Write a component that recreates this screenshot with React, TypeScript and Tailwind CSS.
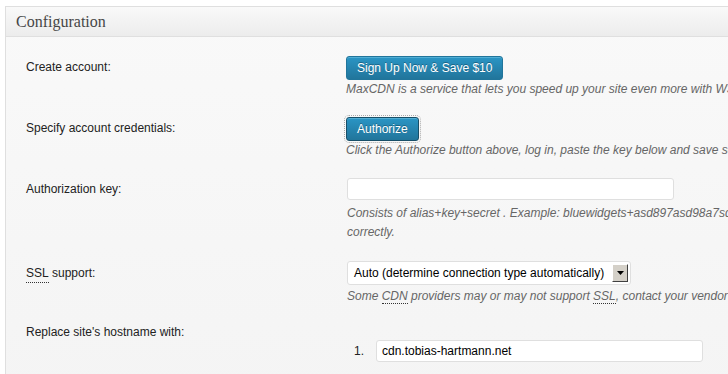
export default function App() {
  const desc = "text-[12px] italic text-[#666] leading-[18px] whitespace-nowrap";
  const label = "w-[340px] shrink-0 pl-5 text-[12px] text-[#222] flex items-center";
  const abbr = "border-b border-dotted border-[#333]";

  return (
    <div className="w-[728px] h-[374px] overflow-hidden bg-white pt-[6px] pl-[5px] font-['Liberation_Sans',Arial,sans-serif]">
      <div className="w-[760px] h-[400px] border-l border-t border-[#dfdfdf] bg-gradient-to-b from-[#f9f9f9] to-[#f4f4f4]">
        <div className="h-[30px] flex items-center pl-[10px] border-b border-[#dfdfdf] bg-gradient-to-b from-[#f9f9f9] to-[#ececec]">
          <h3 className="text-[16px] text-[#464646] font-['Liberation_Serif',Georgia,serif] leading-none">Configuration</h3>
        </div>

        {/* create account */}
        <div className="flex pt-[18px]">
          <div className={`${label} h-6`}>Create account:</div>
          <div>
            <button className="h-6 px-[10px] rounded-[3px] border border-[#21759b] bg-gradient-to-b from-[#2a95c5] to-[#21759b] text-white text-[12px] [text-shadow:0_-1px_0_rgba(0,0,0,0.3)] shadow-[inset_0_1px_0_rgba(120,200,230,0.5)]">
              Sign Up Now &amp; Save $10
            </button>
            <p className={desc}>MaxCDN is a service that lets you speed up your site even more with W3 Total Cache.</p>
          </div>
        </div>

        {/* credentials */}
        <div className="flex pt-[18px]">
          <div className={`${label} h-6`}>Specify account credentials:</div>
          <div>
            <button className="h-6 px-[10px] rounded-[3px] border border-[#184f68] bg-gradient-to-b from-[#2a95c5] to-[#21759b] text-white text-[12px] [text-shadow:0_-1px_0_rgba(0,0,0,0.3)] shadow-[inset_0_1px_0_rgba(120,200,230,0.5)] outline-1 outline-dotted outline-[#aaa] outline-offset-[1px]">
              Authorize
            </button>
            <p className={desc}>Click the Authorize button above, log in, paste the key below and save settings.</p>
          </div>
        </div>

        {/* authorization key */}
        <div className="flex pt-[19px]">
          <div className={`${label} h-[22px]`}>Authorization key:</div>
          <div className="pl-px">
            <div className="w-[327px] h-[22px] bg-white border border-[#dfdfdf] rounded-[3px]" />
            <p className="mt-[4px] text-[12px] italic text-[#666] leading-[19px] whitespace-nowrap">
              Consists of alias+key+secret . Example: bluewidgets+asd897asd98a7sd+asd7as98d7a
              <br />
              correctly.
            </p>
          </div>
        </div>

        {/* ssl */}
        <div className="flex pt-[19px]">
          <div className={`${label} h-6`}>
            <span className={abbr}>SSL</span>&nbsp;support:
          </div>
          <div className="pl-px">
            <div className="w-[284px] h-6 bg-white border border-[#dfdfdf] rounded-[3px] flex items-center pl-[6px] pr-[2px] justify-between">
              <span className="text-[12px] text-black">Auto (determine connection type automatically)</span>
              <span className="w-4 h-[18px] bg-[#d4d0c8] border border-t-white border-l-white border-r-[#404040] border-b-[#404040] flex items-center justify-center">
                <svg width="7" height="4" viewBox="0 0 7 4">
                  <path d="M0 0h7L3.5 4z" fill="#000" />
                </svg>
              </span>
            </div>
            <p className={`${desc} mt-[2px]`}>
              Some <span className={abbr}>CDN</span> providers may or may not support <span className={abbr}>SSL</span>, contact your vendor for more information.
            </p>
          </div>
        </div>

        {/* hostname */}
        <div className="flex pt-[18px]">
          <div className={`${label} h-[18px] items-start`}>Replace site's hostname with:</div>
          <ol className="mt-[17px] flex items-center">
            <li className="flex items-center">
              <span className="w-[30px] pl-2 text-[12px] text-[#222]">1.</span>
              <div className="w-[327px] h-[22px] bg-white border border-[#dfdfdf] rounded-[3px] flex items-center pl-[5px] text-[12px] text-black">
                cdn.tobias-hartmann.net
              </div>
            </li>
          </ol>
        </div>
      </div>
    </div>
  );
}
